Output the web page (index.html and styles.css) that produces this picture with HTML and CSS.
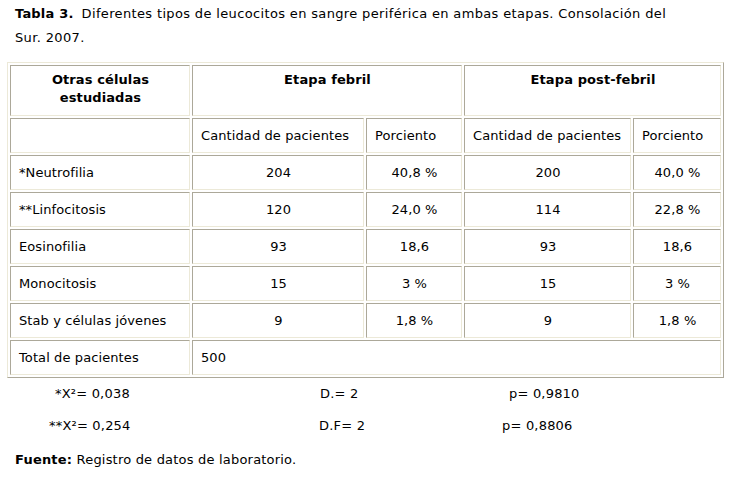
FILE: index.html
```html
<!DOCTYPE html>
<html lang="es">
<head>
<meta charset="utf-8">
<title>Tabla 3</title>
<link rel="stylesheet" href="styles.css">
</head>
<body>
<div class="page">
  <p class="title"><b class="label">Tabla 3.</b>Diferentes tipos de leucocitos en sangre periférica en ambas etapas. Consolación del Sur. 2007.</p>
  <table class="data">
    <colgroup>
      <col class="c1"><col class="c2"><col class="c3"><col class="c4"><col class="c5">
    </colgroup>
    <tr class="head">
      <th>Otras células<br>estudiadas</th>
      <th colspan="2">Etapa febril</th>
      <th colspan="2">Etapa post-febril</th>
    </tr>
    <tr>
      <td></td>
      <td>Cantidad de pacientes</td>
      <td>Porciento</td>
      <td>Cantidad de pacientes</td>
      <td>Porciento</td>
    </tr>
    <tr>
      <td>*Neutrofilia</td>
      <td class="num">204</td>
      <td class="num">40,8 %</td>
      <td class="num">200</td>
      <td class="num">40,0 %</td>
    </tr>
    <tr>
      <td>**Linfocitosis</td>
      <td class="num">120</td>
      <td class="num">24,0 %</td>
      <td class="num">114</td>
      <td class="num">22,8 %</td>
    </tr>
    <tr>
      <td>Eosinofilia</td>
      <td class="num">93</td>
      <td class="num">18,6</td>
      <td class="num">93</td>
      <td class="num">18,6</td>
    </tr>
    <tr>
      <td>Monocitosis</td>
      <td class="num">15</td>
      <td class="num">3 %</td>
      <td class="num">15</td>
      <td class="num">3 %</td>
    </tr>
    <tr>
      <td>Stab y células jóvenes</td>
      <td class="num">9</td>
      <td class="num">1,8 %</td>
      <td class="num">9</td>
      <td class="num">1,8 %</td>
    </tr>
    <tr>
      <td>Total de pacientes</td>
      <td colspan="4">500</td>
    </tr>
  </table>
  <div class="stat stat1">
    <span class="s-a">*X²= 0,038</span><span class="s-b">D.= 2</span><span>p= 0,9810</span>
  </div>
  <div class="stat stat2">
    <span class="s-a">**X²= 0,254</span><span class="s-b">D.F= 2</span><span>p= 0,8806</span>
  </div>
  <p class="source"><b>Fuente:</b> Registro de datos de laboratorio.</p>
</div>
</body>
</html>
```

FILE: styles.css
```css
html, body {
  margin: 0;
  padding: 0;
  background: #ffffff;
}

body {
  font-family: "DejaVu Sans", Verdana, sans-serif;
  font-size: 13px;
  color: #000000;
}

.page {
  padding: 2px 0 0 7px;
}

.title {
  margin: 0 0 12px 8px;
  width: 672px;
  line-height: 24px;
  letter-spacing: 0.35px;
}

.title .label {
  display: inline-block;
  margin-right: 8px;
  letter-spacing: 0.2px;
}

.data {
  table-layout: fixed;
  width: 717px;
  border-collapse: separate;
  border-spacing: 2px;
  border: 1px solid;
  border-color: #ece9d8 #aca899 #aca899 #ece9d8;
}

.c1 { width: 180px; }
.c2 { width: 172px; }
.c3 { width: 96px; }
.c4 { width: 167px; }
.c5 { width: 88px; }

.data th,
.data td {
  box-sizing: border-box;
  border: 1px solid;
  border-color: #aca899 #ece9d8 #ece9d8 #aca899;
  padding: 0 7px 0 8px;
  line-height: 18px;
  height: 35px;
  text-align: left;
  vertical-align: middle;
  white-space: nowrap;
  letter-spacing: 0.1px;
}

.data .head th {
  height: 51px;
  font-weight: bold;
  text-align: center;
  vertical-align: top;
  padding-top: 5px;
}

.data td.num {
  text-align: center;
}

.stat {
  line-height: 18px;
  white-space: nowrap;
  letter-spacing: 0.2px;
}

.stat span {
  display: inline-block;
}

.stat1 {
  margin-top: 7px;
  padding-left: 48px;
}

.stat1 .s-a { width: 265px; }
.stat1 .s-b { width: 189px; }

.stat2 {
  margin-top: 14px;
  padding-left: 42px;
}

.stat2 .s-a { width: 270px; }
.stat2 .s-b { width: 183px; }

.source {
  margin: 16px 0 0 8px;
  line-height: 18px;
  letter-spacing: 0.2px;
}
```
